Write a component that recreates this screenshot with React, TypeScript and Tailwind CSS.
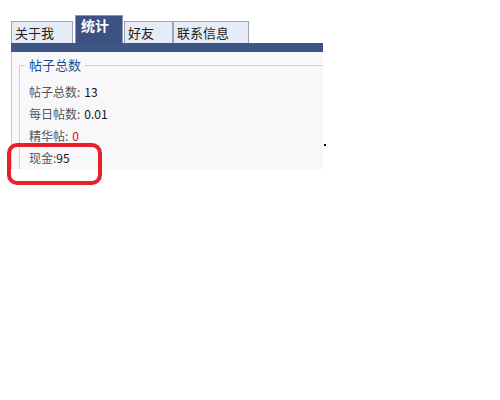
export default function App() {
  const tabs = ["关于我", "统计", "好友", "联系信息"];
  const rows = [
    { label: "帖子总数", value: "13", red: false },
    { label: "每日帖数", value: "0.01", red: false },
    { label: "精华帖", value: "0", red: true },
  ];

  return (
    <div
      className="relative h-[400px] w-[500px] bg-white text-[12px]"
      style={{ fontFamily: '"Noto Sans CJK SC", "Noto Sans", sans-serif' }}
    >
      <div className="flex flex-col pl-[11px] pt-[15px]">
        {/* tabs */}
        <div className="flex h-[28px] items-end">
          {tabs.map((t, i) =>
            i === 1 ? (
              <div
                key={t}
                className="ml-[2px] flex h-[28px] w-[48px] items-start border border-b-0 border-[#8a98b8] bg-[#3c5282] pl-[5px] pt-[1px] text-[14px] font-bold leading-[16px] text-white"
              >
                {t}
              </div>
            ) : (
              <div
                key={t}
                className={`flex h-[22px] items-center border border-b-0 border-[#9aa4b8] bg-[#e6ecf5] pl-[3px] text-[13px] leading-[16px] text-[#222] ${
                  i === 0 ? "w-[62px]" : i === 2 ? "ml-[1px] w-[49px]" : "w-[76px]"
                }`}
              >
                {t}
              </div>
            )
          )}
        </div>
        {/* bar */}
        <div className="h-[9px] w-[312px] bg-[#3d5685]" />
        {/* panel */}
        <div className="h-[117px] w-[312px] overflow-hidden border-l border-[#c8ccd4] bg-[#f8f8fb] pl-[7px] pt-[5px]">
          <div className="relative mt-[8px] h-[200px] border border-r-0 border-[#c4d4e6] pl-[9px] pt-[18px]">
            <div className="absolute left-[5px] top-[-9px] bg-[#f8f8fb] px-[4px] text-[13px] leading-[16px] text-[#1d4f8e]">
              帖子总数
            </div>
            <div className="flex flex-col gap-[6px]">
              {rows.map((r) => (
                <div key={r.label} className="flex h-[16px] items-center leading-[16px]">
                  <span className="text-[#555]">{r.label}:</span>
                  <span className={`ml-[4px] ${r.red ? "text-[#e00]" : "text-[#111]"}`}>{r.value}</span>
                </div>
              ))}
              <div className="flex h-[16px] items-center leading-[16px]">
                <span className="text-[#555]">现金:</span>
                <span className="text-[#111]">95</span>
              </div>
            </div>
          </div>
        </div>
      </div>
      {/* highlight */}
      <div className="absolute left-[7px] top-[143px] h-[42px] w-[95px] rounded-[10px] border-[4px] border-[#e8202a]" />
      <div className="absolute left-[324px] top-[144px] h-[2px] w-[2px] bg-black" />
    </div>
  );
}
